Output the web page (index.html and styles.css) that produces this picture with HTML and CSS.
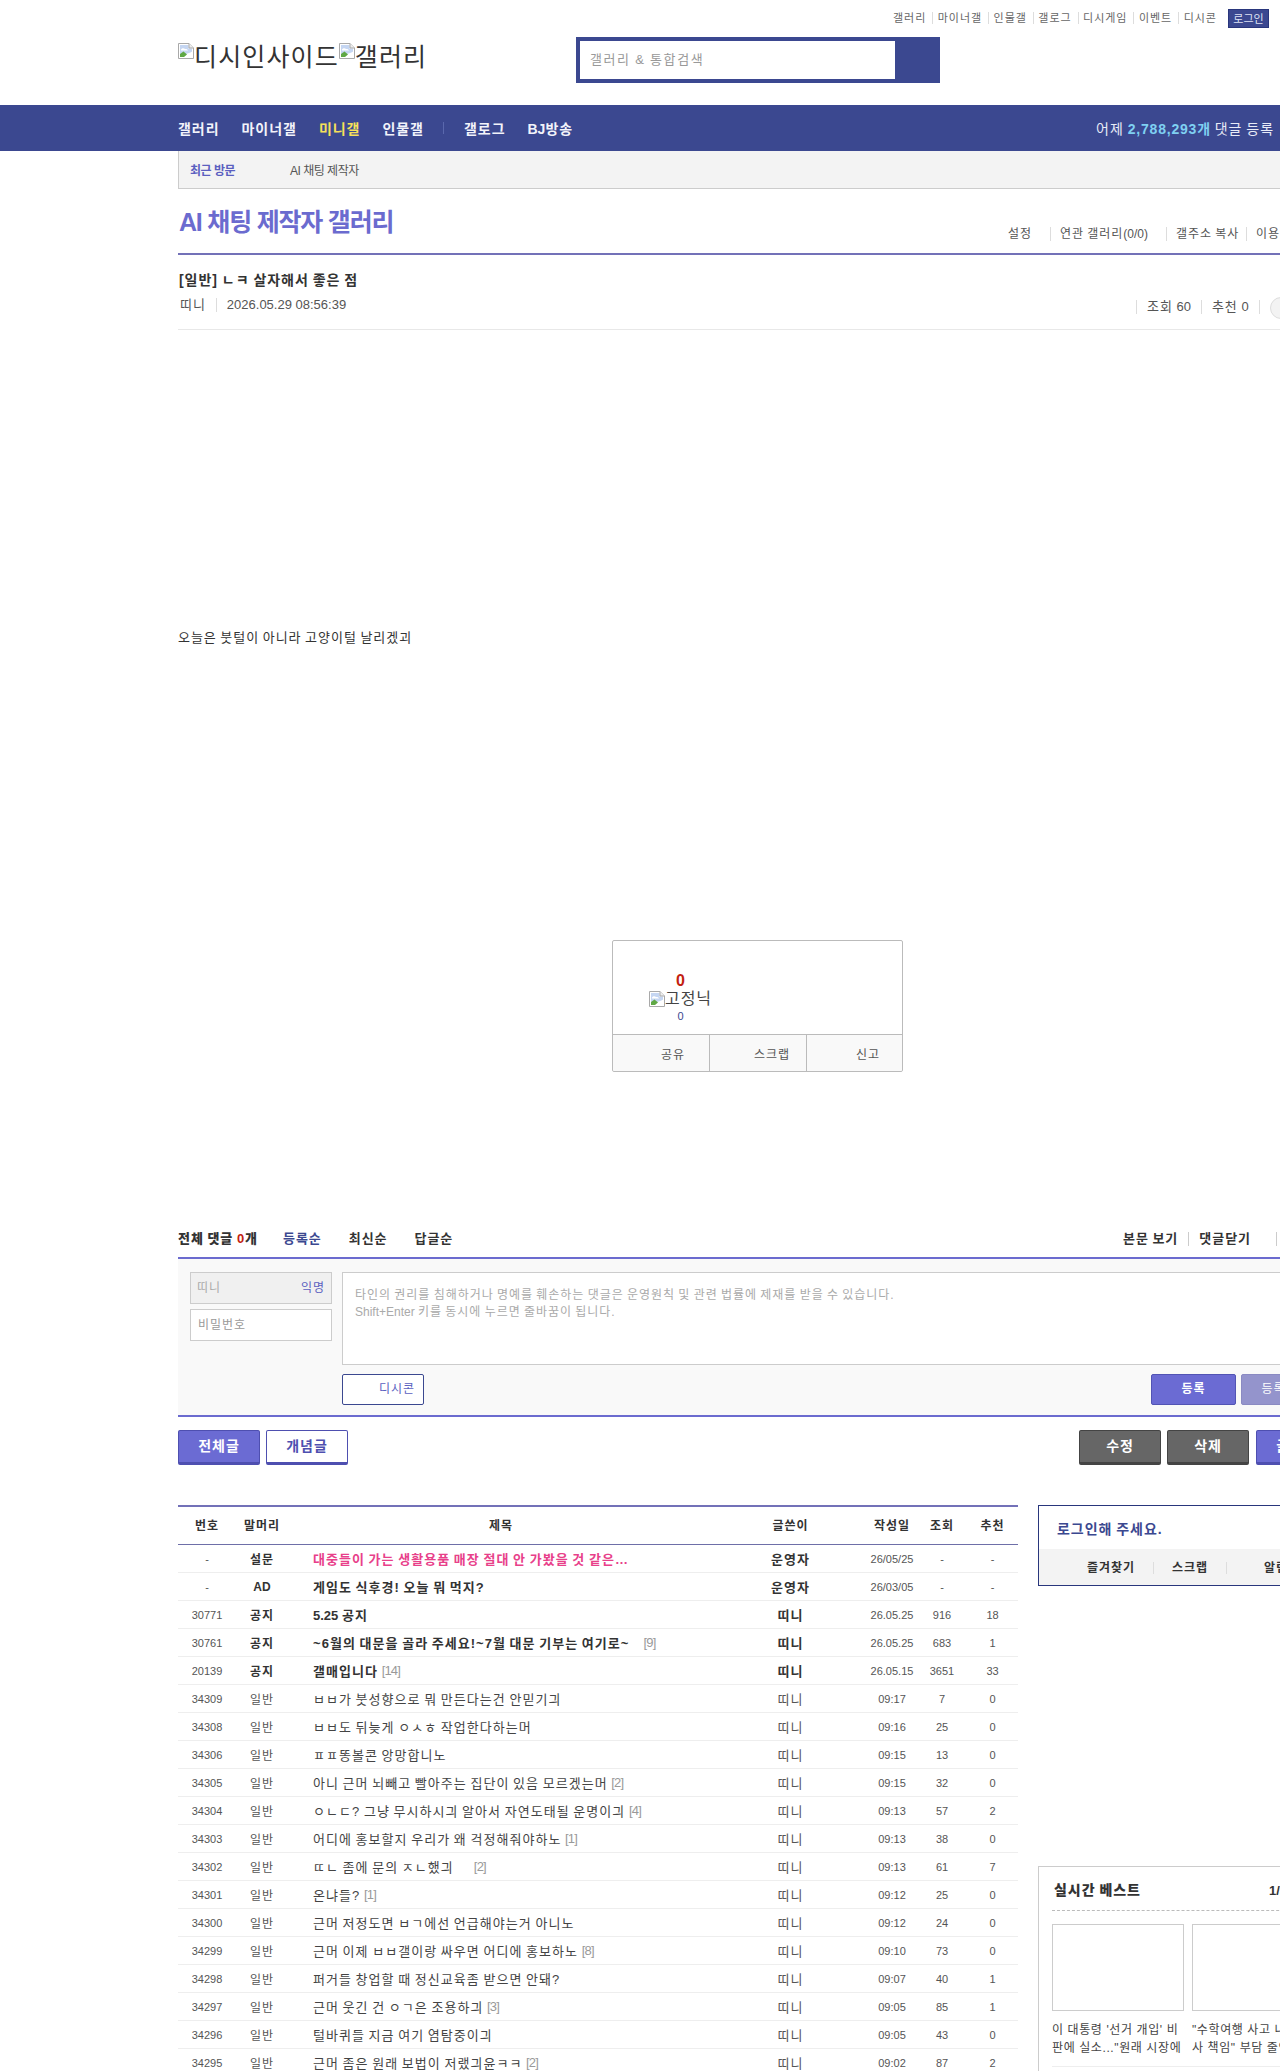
FILE: index.html
```html
<!DOCTYPE html>
<html lang="ko">
<head>
<meta charset="utf-8">
<title>AI 채팅 제작자 갤러리</title>
<link rel="stylesheet" href="styles.css">
</head>
<body>
<svg class="defs" width="0" height="0" aria-hidden="true"><defs>
<symbol id="broken" viewBox="0 0 16 16">
<path d="M.5.5H11L15.5 5V15.5H.5Z" fill="#fff" stroke="#a9a9a9"/>
<path d="M2 2H10.5V5.5H14V9L2 13Z" fill="#c5d6f2"/>
<path d="M3 6.5C4 5 6 5 7 6C8.5 5.8 9.5 6.3 10 7.5H3Z" fill="#fff"/>
<path d="M2 14V11L5.5 8.5L9 11.5L6 14Z" fill="#5fa845"/>
<path d="M8 14L14 8.5V14Z" fill="#fff"/>
<path d="M11 .5V5H15.5" fill="#eee" stroke="#a9a9a9"/>
</symbol>
</defs></svg>

<header class="top">
  <ul class="util">
    <li>갤러리</li><li>마이너갤</li><li>인물갤</li><li>갤로그</li><li>디시게임</li><li>이벤트</li><li>디시콘</li>
  </ul>
  <a class="login">로그인</a>
  <div class="brand-row">
    <div class="logo"><svg class="bk"><use href="#broken"/></svg>디시인사이드<svg class="bk"><use href="#broken"/></svg>갤러리</div>
    <div class="search"><div class="search-field">갤러리 &amp; 통합검색</div><div class="search-btn"></div></div>
  </div>
</header>

<nav class="gnb">
  <ul class="gnb-list">
    <li>갤러리</li><li>마이너갤</li><li class="on">미니갤</li><li>인물갤</li><li class="gnb-sep"></li><li>갤로그</li><li><span class="lat">BJ</span>방송</li>
  </ul>
  <p class="gnb-count">어제 <b>2,788,293개</b> 댓글 등록</p>
</nav>

<div class="page">
  <div class="recent"><b>최근 방문</b><span>AI 채팅 제작자</span></div>

  <div class="gall-head">
    <h1>AI 채팅 제작자 갤러리</h1>
    <ul class="gall-links">
      <li class="l1">설정</li><li class="l2">연관 갤러리<span class="lat">(0/0)</span></li><li class="l3">갤주소 복사</li><li class="l4">이용</li>
    </ul>
  </div>

  <div class="post-head">
    <h2>[일반] ㄴㅋ 살자해서 좋은 점</h2>
    <div class="post-meta">
      <div class="meta-left"><span>띠니</span><span class="date">2026.05.29 08:56:39</span></div>
      <div class="meta-right"><span>조회 <span class="lat">60</span></span><span>추천 <span class="lat">0</span></span><span></span><i class="circle"></i></div>
    </div>
  </div>

  <div class="post-body">
    <p>오늘은 붓털이 아니라 고양이털 날리겠괴</p>
    <div class="rec">
      <div class="rec-top">
        <div class="rec-col">
          <strong>0</strong>
          <div class="rec-fix"><svg class="bk"><use href="#broken"/></svg>고정닉</div>
          <em>0</em>
        </div>
      </div>
      <div class="rec-bottom"><span>공유</span><span>스크랩</span><span>신고</span></div>
    </div>
  </div>

  <div class="cmt-head">
    <div class="cmt-tabs"><b>전체 댓글 <i>0</i>개</b><a class="on">등록순</a><a>최신순</a><a>답글순</a></div>
    <div class="cmt-links"><a>본문 보기</a><a>댓글닫기</a><a class="last"></a></div>
  </div>

  <div class="cmt-form">
    <div class="cmt-id">
      <div class="nick"><span>띠니</span><b>익명</b></div>
      <div class="pw">비밀번호</div>
    </div>
    <div class="cmt-main">
      <div class="cmt-text">타인의 권리를 침해하거나 명예를 훼손하는 댓글은 운영원칙 및 관련 법률에 제재를 받을 수 있습니다.<br><span class="lat">Shift+Enter</span> 키를 동시에 누르면 줄바꿈이 됩니다.</div>
      <div class="cmt-actions">
        <a class="dccon">디시콘</a>
        <div class="submit"><a class="reg">등록</a><a class="reg2">등록+추천</a></div>
      </div>
    </div>
  </div>

  <div class="btn-row">
    <div class="btn-group"><a class="btn fill">전체글</a><a class="btn outline">개념글</a></div>
    <div class="btn-group wide"><a class="btn gray">수정</a><a class="btn gray">삭제</a><a class="btn fill">글쓰기</a></div>
  </div>

  <div class="columns">
    <table class="list">
      <colgroup><col class="c-no"><col class="c-sub"><col class="c-title"><col class="c-writer"><col class="c-date"><col class="c-view"><col class="c-rec"></colgroup>
      <thead><tr><th>번호</th><th>말머리</th><th>제목</th><th>글쓴이</th><th>작성일</th><th>조회</th><th>추천</th></tr></thead>
      <tbody>
        <tr class="notice"><td>-</td><td>설문</td><td class="t pink">대중들이 가는 생활용품 매장 절대 안 가봤을 것 같은…</td><td class="big">운영자</td><td>26/05/25</td><td>-</td><td>-</td></tr>
        <tr class="notice"><td>-</td><td><span class="lat">AD</span></td><td class="t">게임도 식후경! 오늘 뭐 먹지?</td><td class="big">운영자</td><td>26/03/05</td><td>-</td><td>-</td></tr>
        <tr class="notice"><td>30771</td><td>공지</td><td class="t"><span class="lat">5.25</span> 공지</td><td class="big">띠니</td><td>26.05.25</td><td>916</td><td>18</td></tr>
        <tr class="notice"><td>30761</td><td>공지</td><td class="t">~6월의 대문을 골라 주세요!~7월 대문 기부는 여기로~<s class="gap-a">[9]</s></td><td class="big">띠니</td><td>26.05.25</td><td>683</td><td>1</td></tr>
        <tr class="notice"><td>20139</td><td>공지</td><td class="t">갤매입니다 <s>[14]</s></td><td class="big">띠니</td><td>26.05.15</td><td>3651</td><td>33</td></tr>
        <tr><td>34309</td><td>일반</td><td class="t">ㅂㅂ가 붓성향으로 뭐 만든다는건 안믿기긔</td><td class="big">띠니</td><td>09:17</td><td>7</td><td>0</td></tr>
        <tr><td>34308</td><td>일반</td><td class="t">ㅂㅂ도 뒤늦게 ㅇㅅㅎ 작업한다하는머</td><td class="big">띠니</td><td>09:16</td><td>25</td><td>0</td></tr>
        <tr><td>34306</td><td>일반</td><td class="t">ㅍㅍ똥볼콘 앙망합니노</td><td class="big">띠니</td><td>09:15</td><td>13</td><td>0</td></tr>
        <tr><td>34305</td><td>일반</td><td class="t">아니 근머 뇌빼고 빨아주는 집단이 있음 모르겠는머 <s>[2]</s></td><td class="big">띠니</td><td>09:15</td><td>32</td><td>0</td></tr>
        <tr><td>34304</td><td>일반</td><td class="t">ㅇㄴㄷ? 그냥 무시하시긔 알아서 자연도태될 운명이긔 <s>[4]</s></td><td class="big">띠니</td><td>09:13</td><td>57</td><td>2</td></tr>
        <tr><td>34303</td><td>일반</td><td class="t">어디에 홍보할지 우리가 왜 걱정해줘야하노 <s>[1]</s></td><td class="big">띠니</td><td>09:13</td><td>38</td><td>0</td></tr>
        <tr><td>34302</td><td>일반</td><td class="t">ㄸㄴ 좀에 문의 ㅈㄴ했긔<s class="gap-b">[2]</s></td><td class="big">띠니</td><td>09:13</td><td>61</td><td>7</td></tr>
        <tr><td>34301</td><td>일반</td><td class="t">온냐들? <s>[1]</s></td><td class="big">띠니</td><td>09:12</td><td>25</td><td>0</td></tr>
        <tr><td>34300</td><td>일반</td><td class="t">근머 저정도면 ㅂㄱ에선 언급해야는거 아니노</td><td class="big">띠니</td><td>09:12</td><td>24</td><td>0</td></tr>
        <tr><td>34299</td><td>일반</td><td class="t">근머 이제 ㅂㅂ갤이랑 싸우면 어디에 홍보하노 <s>[8]</s></td><td class="big">띠니</td><td>09:10</td><td>73</td><td>0</td></tr>
        <tr><td>34298</td><td>일반</td><td class="t">퍼거들 창업할 때 정신교육좀 받으면 안돼?</td><td class="big">띠니</td><td>09:07</td><td>40</td><td>1</td></tr>
        <tr><td>34297</td><td>일반</td><td class="t">근머 웃긴 건 ㅇㄱ은 조용하긔 <s>[3]</s></td><td class="big">띠니</td><td>09:05</td><td>85</td><td>1</td></tr>
        <tr><td>34296</td><td>일반</td><td class="t">털바퀴들 지금 여기 염탐중이긔</td><td class="big">띠니</td><td>09:05</td><td>43</td><td>0</td></tr>
        <tr><td>34295</td><td>일반</td><td class="t">근머 좀은 원래 보법이 저랬긔윤ㅋㅋ <s>[2]</s></td><td class="big">띠니</td><td>09:02</td><td>87</td><td>2</td></tr>
      </tbody>
    </table>

    <aside class="side">
      <div class="login-box">
        <div class="login-msg">로그인해 주세요.</div>
        <ul class="login-tabs"><li class="a">즐겨찾기</li><li class="b">스크랩</li><li class="c">알림</li></ul>
      </div>
      <div class="best">
        <div class="best-head"><b>실시간 베스트</b><span>1/5</span></div>
        <div class="best-items">
          <div class="best-item"><div class="thumb"></div><p>이 대통령 '선거 개입' 비판에 실소..."원래 시장에</p></div>
          <div class="best-item"><div class="thumb"></div><p>"수학여행 사고 내면 교사 책임" 부담 줄인다</p></div>
        </div>
      </div>
    </aside>
  </div>
</div>
</body>
</html>
```

FILE: styles.css
```css
* { box-sizing: border-box; }
html, body { margin: 0; padding: 0; height: 2071px; overflow: hidden; background: #fff; }
body { font-family: "Liberation Sans", "Noto Sans CJK KR", sans-serif; font-size: 12px; color: #333; width: 1280px; position: relative; letter-spacing: .08em; word-spacing: -.08em; }
ul { list-style: none; margin: 0; padding: 0; }
p, h1, h2 { margin: 0; }
a { display: block; }
.defs { position: absolute; }
.bk { width: 16px; height: 16px; flex: none; }
.lat { letter-spacing: 0; word-spacing: 0; }

/* top */
.top { height: 105px; position: relative; padding-top: 37px; }
.util { position: absolute; top: 12px; left: 893px; display: flex; font-size: 11px; color: #666; }
.util li { padding-right: 6px; margin-right: 4.5px; border-right: 1px solid #ddd; height: 12px; line-height: 12px; }
.util li:last-child { border: 0; margin: 0; }
.login { position: absolute; top: 9px; left: 1228px; width: 41px; height: 19px; background: #3b4890; border: 1px solid #29367c; color: #dfe3f5; font-size: 11px; line-height: 18px; text-align: center; letter-spacing: 0; }
.brand-row { display: flex; padding-left: 178px; }
.logo { width: 398px; display: flex; align-items: flex-start; font-size: 25px; line-height: 28px; color: #333; padding-top: 6px; letter-spacing: .045em; }
.search { width: 364px; height: 46px; border: 4px solid #3b4890; display: flex; background: #fff; }
.search-field { width: 315px; padding-left: 10px; font-size: 13px; line-height: 38px; color: #999; letter-spacing: .12em; word-spacing: -.04em; }
.search-btn { flex: 1; background: #3b4890; }

/* nav */
.gnb { height: 46px; background: #3b4890; display: flex; justify-content: space-between; align-items: center; padding: 0 6px 0 178px; color: #fff; }
.gnb-list { display: flex; font-size: 14px; font-weight: 700; gap: 22px; align-items: center; color: #f2f3fa; }
.gnb-list .on { color: #f6e05a; }
.gnb-sep { width: 1px; height: 12px; background: #5a68ad; margin: 0 -2px 0 -3px; }
.gnb-count { font-size: 14px; color: #e8ebf7; }
.gnb-count b { color: #7fd0f2; letter-spacing: .8px; }

/* page */
.page { padding-left: 178px; width: 1338px; }
.recent { height: 38px; background: #f3f3f3; border-left: 1px solid #ccc; border-bottom: 1px solid #ccc; display: flex; align-items: center; padding-left: 11px; font-size: 12px; letter-spacing: -.5px; word-spacing: 0; }
.recent b { width: 100px; color: #5b5fc0; }
.recent span { color: #555; }

.gall-head { height: 66px; border-bottom: 2px solid #7371b8; position: relative; }
.gall-head h1 { position: absolute; left: 1px; top: 16px; font-size: 25px; line-height: 34px; font-weight: 700; color: #6b6bcf; letter-spacing: -1.2px; word-spacing: 0; white-space: nowrap; }
.gall-links { position: absolute; left: 830px; top: 38px; display: flex; font-size: 12px; color: #555; white-space: nowrap; }
.gall-links li { padding-left: 9px; border-left: 1px solid #ddd; height: 14px; line-height: 14px; }
.gall-links .l1 { border: 0; padding-left: 0; width: 42px; }
.gall-links .l2 { width: 116px; }
.gall-links .l3 { width: 80px; }

.post-head { height: 75px; border-bottom: 1px solid #e8e8e8; padding: 16px 0 0 1px; }
.post-head h2 { font-size: 14px; line-height: 18px; font-weight: 700; color: #333; }
.post-meta { display: flex; justify-content: space-between; margin-top: 6px; padding-left: 1px; font-size: 13px; line-height: 20px; color: #555; }
.meta-left { display: flex; }
.meta-left span:first-child { padding-right: 10px; }
.date { border-left: 1px solid #ddd; padding-left: 10px; height: 14px; line-height: 14px; margin-top: 3px; letter-spacing: 0; word-spacing: 0; }
.meta-right { display: flex; align-items: center; width: 202px; margin-top: 4px; position: relative; }
.meta-right > span { border-left: 1px solid #ddd; padding: 0 10px; height: 14px; line-height: 14px; }
.circle { position: absolute; left: 134px; top: -2px; width: 30px; height: 22px; border: 1px solid #ddd; border-radius: 11px; background: #f3f3f3; }

.post-body { height: 743px; padding-top: 300px; }
.post-body p { font-size: 13px; line-height: 16px; color: #333; }
.rec { width: 291px; height: 132px; margin: 294px 0 0 434px; border: 1px solid #bbb; border-radius: 2px; display: flex; flex-direction: column; }
.rec-top { height: 93px; flex: none; padding: 31px 0 0 36px; }
.rec-col { width: 64px; text-align: center; }
.rec-col strong { display: block; font-size: 16px; line-height: 18px; color: #c3210f; }
.rec-fix { display: flex; align-items: center; font-size: 16px; line-height: 18px; color: #444; }
.rec-col em { display: block; font-style: normal; font-size: 11px; line-height: 13px; color: #3b4890; margin-top: 2px; }
.rec-bottom { height: 37px; flex: none; display: flex; border-top: 1px solid #bbb; background: #f9f9f9; font-size: 12px; color: #555; border-radius: 0 0 2px 2px; }
.rec-bottom span { width: 97px; height: 36px; line-height: 40px; border-left: 1px solid #bbb; text-align: right; padding-right: 16px; }
.rec-bottom span:first-child { border: 0; width: 96px; padding-right: 24px; }
.rec-bottom span:last-child { flex: 1; padding-right: 22px; }

.cmt-head { height: 40px; margin-top: 146px; border-bottom: 2px solid #6b6bcf; display: flex; justify-content: space-between; font-size: 13px; font-weight: 700; line-height: 18px; padding-top: 11px; color: #333; }
.cmt-tabs { display: flex; }
.cmt-tabs b { width: 105px; }
.cmt-tabs i { font-style: normal; color: #c3210f; }
.cmt-tabs a { margin-right: 27px; }
.cmt-tabs .on { color: #3b4890; }
.cmt-links { display: flex; width: 215px; }
.cmt-links a { height: 14px; line-height: 14px; margin-top: 2px; }
.cmt-links a:first-child { padding-right: 10px; margin-right: 10px; border-right: 1px solid #ccc; }
.cmt-links .last { border-left: 1px solid #ccc; margin-left: 25px; }

.cmt-form { height: 158px; background: #f9f9f9; border-bottom: 2px solid #6b6bcf; display: flex; padding: 13px 0 0 12px; }
.cmt-id { width: 152px; }
.nick { height: 32px; width: 142px; background: #f0f0f0; border: 1px solid #ccc; display: flex; justify-content: space-between; padding: 0 6px; line-height: 31px; font-size: 12px; color: #aaa; }
.nick b { font-weight: 400; color: #5b5fc0; font-size: 12px; }
.pw { height: 32px; width: 142px; margin-top: 5px; background: #fff; border: 1px solid #ccc; padding-left: 7px; line-height: 31px; color: #999; }
.cmt-main { width: 996px; }
.cmt-text { height: 93px; background: #fff; border: 1px solid #ccc; padding: 14px 12px; font-size: 12px; line-height: 17px; color: #aaa; white-space: nowrap; }
.cmt-actions { display: flex; justify-content: space-between; margin-top: 9px; }
.dccon { width: 82px; height: 31px; background: #fff; border: 1px solid #3b4890; border-radius: 2px; color: #5b5fc0; line-height: 29px; text-align: right; padding-right: 8px; font-size: 12px; }
.submit { display: flex; gap: 5px; font-size: 12px; line-height: 29px; text-align: center; }
.reg { width: 85px; height: 31px; background: #6b6bd3; border: 1px solid #5254b4; border-radius: 2px; color: #fff; font-weight: 700; }
.reg2 { width: 97px; height: 31px; background: #9494cc; border: 1px solid #8a8ac2; border-radius: 2px; color: #fff; }

.btn-row { display: flex; justify-content: space-between; margin-top: 13px; height: 75px; }
.btn-group { display: flex; gap: 6px; }
.wide .fill { margin-left: 1px; }
.btn { width: 82px; height: 35px; border-radius: 2px; font-size: 14px; font-weight: 700; text-align: center; line-height: 30px; border: 1px solid; border-bottom-width: 3px; }
.fill { background: #6b6bd3; border-color: #4e4fb0; color: #fff; }
.outline { background: #fff; border-color: #4e4fb0; color: #4e4fb0; }
.gray { background: #666; border-color: #444; color: #fff; }

.columns { display: flex; align-items: flex-start; gap: 20px; }
.list { width: 840px; table-layout: fixed; border-collapse: separate; border-spacing: 0; border-top: 2px solid #7371b8; font-size: 11px; color: #555; flex: none; letter-spacing: 0; word-spacing: 0; }
.c-no { width: 58px; } .c-sub { width: 52px; } .c-title { width: 426px; } .c-writer { width: 153px; } .c-date { width: 50px; } .c-view { width: 50px; } .c-rec { width: 51px; }
.list th { height: 38px; border-bottom: 1px solid #6e6fa8; font-size: 12px; font-weight: 700; color: #333; padding: 0 0 2px; letter-spacing: .08em; }
.list td { height: 28px; padding: 0; text-align: center; border-bottom: 1px solid #eee; white-space: nowrap; overflow: hidden; }
.list td:nth-child(2) { font-size: 12px; letter-spacing: .08em; }
.list .t { text-align: left; padding-left: 25px; font-size: 13px; color: #444; overflow: visible; letter-spacing: .08em; word-spacing: -.08em; }
.list .t s { text-decoration: none; color: #999; font-size: 13px; letter-spacing: -.8px; vertical-align: 1px; }
.list .t .gap-a { margin-left: 14px; }
.list .t .gap-b { margin-left: 20px; }
.list .big { font-size: 13px; letter-spacing: .08em; }
.notice td:nth-child(2), .notice .t, .notice .big { font-weight: 700; color: #333; }
.notice s { font-weight: 400; }
.list .pink { color: #e8408a; }

.side { width: 300px; flex: none; }
.login-box { height: 81px; border: 1px solid #29367c; }
.login-msg { height: 43px; padding: 14px 0 0 18px; font-size: 14px; font-weight: 700; line-height: 18px; color: #3b4890; }
.login-tabs { height: 36px; background: #f3f3f3; display: flex; align-items: center; font-size: 12px; font-weight: 700; color: #333; padding-top: 2px; }
.login-tabs li { height: 12px; line-height: 12px; }
.login-tabs .a { margin-left: 48px; width: 67px; border-right: 1px solid #ddd; }
.login-tabs .b { margin-left: 18px; width: 55px; border-right: 1px solid #ddd; }
.login-tabs .c { margin-left: 37px; }
.best { margin-top: 280px; height: 260px; border: 1px solid #ccc; padding: 0 13px; }
.best-head { height: 44px; border-bottom: 1px dashed #bbb; display: flex; justify-content: space-between; font-size: 14px; font-weight: 700; line-height: 47px; color: #333; padding-left: 2px; }
.best-head span { font-size: 13px; width: 55px; letter-spacing: 0; }
.best-items { display: flex; gap: 8px; padding-top: 13px; height: 156px; border-bottom: 1px solid #eee; }
.best-item { width: 132px; }
.thumb { height: 87px; border: 1px solid #ccc; }
.best-item p { margin-top: 10px; font-size: 12px; line-height: 18px; color: #444; letter-spacing: .05em; word-spacing: 0; }
```
